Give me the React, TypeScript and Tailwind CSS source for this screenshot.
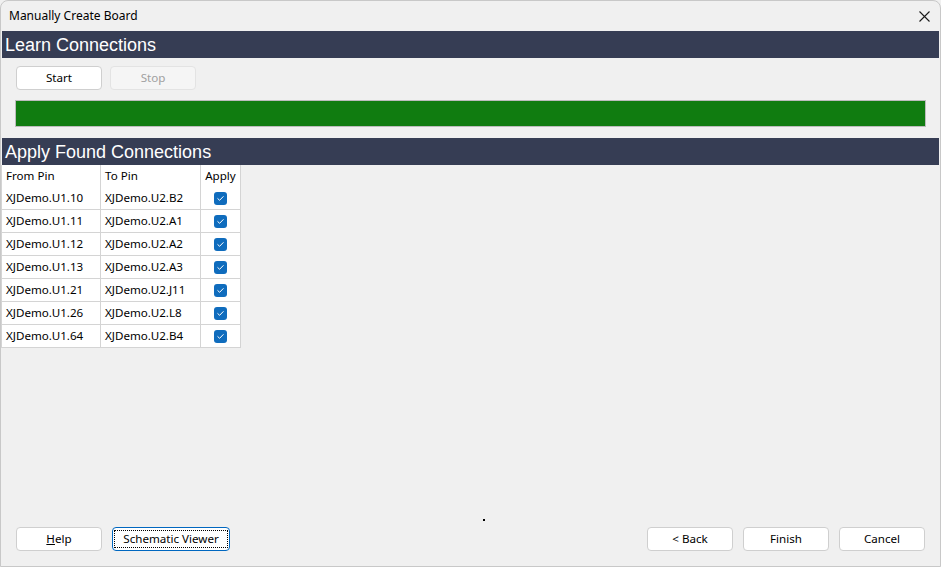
import React from 'react';

const ROWS = [
  { from: 'XJDemo.U1.10', to: 'XJDemo.U2.B2' },
  { from: 'XJDemo.U1.11', to: 'XJDemo.U2.A1' },
  { from: 'XJDemo.U1.12', to: 'XJDemo.U2.A2' },
  { from: 'XJDemo.U1.13', to: 'XJDemo.U2.A3' },
  { from: 'XJDemo.U1.21', to: 'XJDemo.U2.J11' },
  { from: 'XJDemo.U1.26', to: 'XJDemo.U2.L8' },
  { from: 'XJDemo.U1.64', to: 'XJDemo.U2.B4' },
];

const SectionHeader = ({ title }: { title: string }) => (
  <div className="mx-px h-[27px] bg-[#363d54] flex items-center px-[3px] text-white text-[18px] font-['Liberation_Sans',Arial,sans-serif] leading-none">
    {title}
  </div>
);

const Button = ({
  children,
  disabled,
  focused,
  className = '',
}: {
  children: React.ReactNode;
  disabled?: boolean;
  focused?: boolean;
  className?: string;
}) => (
  <button
    type="button"
    className={
      'h-[24px] rounded-[4px] border whitespace-nowrap flex items-center justify-center ' +
      (disabled
        ? 'bg-[#f5f5f5] border-[#e3e3e3] text-[#a0a0a0] '
        : focused
        ? 'bg-white border-[#0067c0] text-black '
        : 'bg-white border-[#cfcfcf] text-black ') +
      className
    }
  >
    {focused ? (
      <span className="border border-dotted border-black px-[8px] leading-[16px]">{children}</span>
    ) : (
      children
    )}
  </button>
);

const Check = () => (
  <span className="w-[13px] h-[13px] rounded-[3px] bg-[#0f6cbd] flex items-center justify-center">
    <svg width="9" height="9" viewBox="0 0 9 9" fill="none">
      <path d="M1.8 4.6 L3.6 6.3 L7.2 2.6" stroke="white" strokeWidth="1" strokeLinecap="round" strokeLinejoin="round" />
    </svg>
  </span>
);

export default function App() {
  return (
    <div className="w-[941px] h-[567px] bg-[#f0f0f0] font-['Noto_Sans',sans-serif] text-[11.6px] text-black">
      <div className="relative w-full h-full border border-[#c8c8c8] rounded-t-[8px] flex flex-col overflow-hidden">
        {/* title bar */}
        <div className="h-[30px] flex items-center justify-between pl-[8px] pr-[9px]">
          <span className="text-[12px]">Manually Create Board</span>
          <svg width="11" height="11" viewBox="0 0 11 11" className="mr-[1px]">
            <path d="M0.5 0.5 L10.5 10.5 M10.5 0.5 L0.5 10.5" stroke="#1a1a1a" strokeWidth="1.1" />
          </svg>
        </div>

        <SectionHeader title="Learn Connections" />

        <div className="px-[14px] pt-[8px] pb-[11px] flex flex-col gap-[10px]">
          <div className="flex gap-[8px] pl-px">
            <Button className="w-[86px]">Start</Button>
            <Button className="w-[86px]" disabled>
              Stop
            </Button>
          </div>
          <div className="h-[27px] w-[911px] border border-[#bcbcbc] bg-[#107c10]" />
        </div>

        <SectionHeader title="Apply Found Connections" />

        {/* connections table */}
        <div className="w-[240px] bg-white border-l border-[#d4d4d4]">
          <div className="flex h-[22px] items-center">
            <div className="w-[99px] px-[4px] border-r border-[#d4d4d4] h-full flex items-center">From Pin</div>
            <div className="w-[100px] px-[4px] border-r border-[#d4d4d4] h-full flex items-center">To Pin</div>
            <div className="w-[40px] h-full flex items-center justify-center border-r border-[#d4d4d4]">Apply</div>
          </div>
          {ROWS.map(r => (
            <div key={r.from} className="flex h-[23px] border-b border-[#d4d4d4]">
              <div className="w-[99px] px-[4px] border-r border-[#d4d4d4] flex items-center">{r.from}</div>
              <div className="w-[100px] px-[4px] border-r border-[#d4d4d4] flex items-center">{r.to}</div>
              <div className="w-[40px] flex items-center justify-center border-r border-[#d4d4d4]">
                <Check />
              </div>
            </div>
          ))}
        </div>

        <div className="flex-1" />

        {/* footer */}
        <div className="flex items-center justify-between pl-[15px] pr-[15px] pb-[15px]">
          <div className="flex gap-[10px]">
            <Button className="w-[86px]">
              <span>
                <span className="underline">H</span>elp
              </span>
            </Button>
            <Button className="w-[118px]" focused>
              Schematic Viewer
            </Button>
          </div>
          <div className="flex gap-[10px]">
            <Button className="w-[86px]">&lt; Back</Button>
            <Button className="w-[86px]">Finish</Button>
            <Button className="w-[86px]">Cancel</Button>
          </div>
        </div>

        <span className="absolute left-[482px] top-[518px] w-[2px] h-[2px] bg-black" />
      </div>
    </div>
  );
}
